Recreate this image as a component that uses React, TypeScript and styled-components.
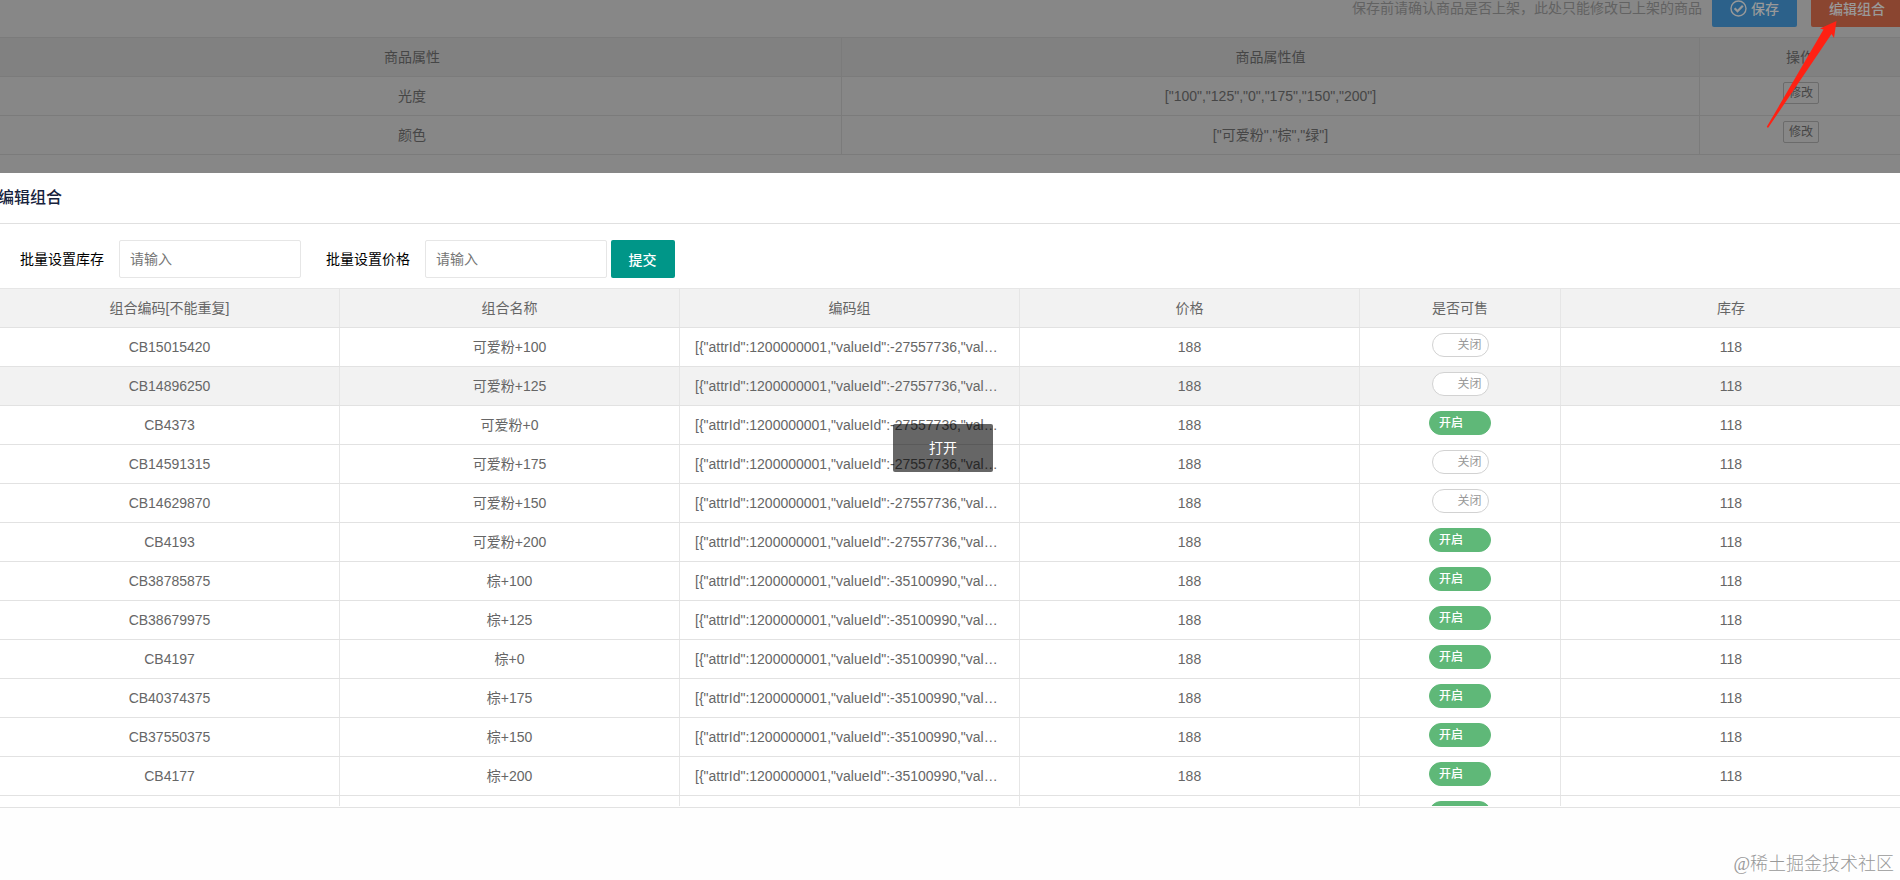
import React from 'react';
import styled, { createGlobalStyle } from 'styled-components';

const Global = createGlobalStyle`
  *, *::before, *::after { box-sizing: border-box; }
  html, body { margin: 0; padding: 0; background: #fff; overflow: hidden; }
  body { font: 14px/24px "Liberation Sans", "Noto Sans CJK SC", sans-serif; color: #333; }
  button, input { font-family: inherit; }
`;

const Page = styled.div`
  position: relative;
  width: 1900px;
  height: 880px;
  overflow: hidden;
  display: flex;
  flex-direction: column;
`;

const Backdrop = styled.section`
  flex: 0 0 173px;
  display: flex;
  flex-direction: column;
  background: #878787;
  overflow: hidden;
`;

const ActionBar = styled.div`
  flex: 0 0 37px;
  height: 37px;
  min-height: 0;
  display: flex;
  justify-content: flex-end;
  align-items: flex-end;
  padding-bottom: 10px;
  margin-right: -17px;
`;

const Hint = styled.span`
  color: #626262;
  line-height: 38px;
  margin-right: 10px;
`;

const ActionButton = styled.button<{ $tone: string; $w: number }>`
  flex: 0 0 ${p => p.$w}px;
  width: ${p => p.$w}px;
  height: 38px;
  margin-right: 14px;
  padding: 0;
  border: 0;
  border-radius: 2px;
  display: flex;
  align-items: center;
  justify-content: center;
  gap: 4px;
  font-size: 14px;
  font-weight: 500;
  color: #999;
  background: ${p => p.$tone};
`;

const AttrTable = styled.div`
  flex: none;
  margin-left: -17px;
  width: 1918px;
  border-top: 1px solid #7b7b7b;
`;

const AttrRow = styled.div<{ $head?: boolean }>`
  display: grid;
  grid-template-columns: 859px 858px 201px;
  height: 39px;
  border-bottom: 1px solid #7b7b7b;
  background: ${p => (p.$head ? '#818181' : 'transparent')};
  color: #464646;
`;

const AttrCell = styled.div`
  display: flex;
  justify-content: center;
  line-height: 38px;
  border-right: 1px solid #7b7b7b;
`;

const EditButton = styled.button`
  width: 36px;
  height: 22px;
  margin: 5px 0 0 2px;
  padding: 0;
  border: 1px solid #6b6b6b;
  border-radius: 2px;
  background: transparent;
  color: #464646;
  font-size: 12px;
  line-height: 20px;
`;

const Dialog = styled.section`
  flex: 1;
  background: #fff;
  display: flex;
  flex-direction: column;
`;

const DialogTitle = styled.h2`
  flex: 0 0 51px;
  margin: 0;
  border-bottom: 1px solid #e0e0e0;
  font-size: 16px;
  font-weight: 500;
  line-height: 49px;
  text-indent: -2px;
  color: #17233d;
`;

const BatchForm = styled.form`
  flex: 0 0 64px;
  display: flex;
  align-items: flex-start;
  padding: 16px 0 0 20px;
`;

const FieldLabel = styled.label`
  width: 99px;
  line-height: 38px;
  color: #000;
`;

const TextInput = styled.input<{ $gap: number }>`
  width: 182px;
  height: 38px;
  margin-right: ${p => p.$gap}px;
  padding: 0 0 0 10px;
  border: 1px solid #e6e6e6;
  border-radius: 2px;
  font-size: 14px;
  outline: none;
  &::placeholder { color: #757575; opacity: 1; }
`;

const Submit = styled.button`
  width: 64px;
  height: 38px;
  padding: 0 1px 1px 0;
  border: 0;
  border-radius: 2px;
  background: #009688;
  color: #fff;
  font-size: 14px;
  font-weight: 500;
`;

const ComboTable = styled.div`
  flex: 0 0 518px;
  overflow: hidden;
  border-top: 1px solid #e6e6e6;
`;

const ComboRow = styled.div<{ $shade?: boolean }>`
  display: grid;
  grid-template-columns: 340px 340px 340px 340px 201px 341px;
  width: 1902px;
  height: 39px;
  border-bottom: 1px solid #e2e2e2;
  background: ${p => (p.$shade ? '#f2f2f2' : '#fff')};
  color: #666;
`;

const ComboCell = styled.div`
  min-width: 0;
  padding: 0 15px;
  line-height: 38px;
  text-align: center;
  white-space: nowrap;
  overflow: hidden;
  text-overflow: ellipsis;
  border-right: 1px solid #e6e6e6;
`;

const SwitchCell = styled(ComboCell)`
  display: flex;
  justify-content: center;
  align-items: flex-start;
  padding-top: 5px;
`;

const Switch = styled.span<{ $on: boolean }>`
  width: ${p => (p.$on ? 62 : 57)}px;
  height: 24px;
  padding: ${p => (p.$on ? '0 0 0 9px' : '0 6px 0 0')};
  border: 1px solid ${p => (p.$on ? '#5fb878' : '#d2d2d2')};
  border-radius: 20px;
  background: ${p => (p.$on ? '#5fb878' : '#fff')};
  color: ${p => (p.$on ? '#fff' : '#999')};
  text-align: ${p => (p.$on ? 'left' : 'right')};
  font-size: 12px;
  font-weight: ${p => (p.$on ? 500 : 400)};
  line-height: 22px;
`;

const Footer = styled.footer`
  flex: 1;
  margin-top: 1px;
  border-top: 1px solid #e2e2e2;
  background: #fefefe;
  display: flex;
  justify-content: flex-end;
  align-items: flex-end;
  padding: 0 6px 3px 0;
`;

const Watermark = styled.span`
  font-family: "Liberation Serif", "Noto Sans CJK SC", serif;
  font-weight: 300;
  font-size: 18px;
  line-height: 26px;
  color: #999;
  white-space: nowrap;
`;

const Toast = styled.div`
  position: absolute;
  left: 893px;
  top: 424px;
  width: 100px;
  height: 48px;
  border-radius: 2px;
  background: rgba(0, 0, 0, 0.6);
  color: #fff;
  line-height: 48px;
  text-align: center;
`;

const Arrow = styled.svg`
  position: absolute;
  left: 1760px;
  top: 15px;
  width: 90px;
  height: 120px;
`;

type Combo = [code: string, name: string, valueId: string, on: boolean];

const combos: Combo[] = [
  ['CB15015420', '可爱粉+100', '-27557736', false],
  ['CB14896250', '可爱粉+125', '-27557736', false],
  ['CB4373', '可爱粉+0', '-27557736', true],
  ['CB14591315', '可爱粉+175', '-27557736', false],
  ['CB14629870', '可爱粉+150', '-27557736', false],
  ['CB4193', '可爱粉+200', '-27557736', true],
  ['CB38785875', '棕+100', '-35100990', true],
  ['CB38679975', '棕+125', '-35100990', true],
  ['CB4197', '棕+0', '-35100990', true],
  ['CB40374375', '棕+175', '-35100990', true],
  ['CB37550375', '棕+150', '-35100990', true],
  ['CB4177', '棕+200', '-35100990', true],
];

const headings = ['组合编码[不能重复]', '组合名称', '编码组', '价格', '是否可售', '库存'];

const attributes = [
  ['光度', '["100","125","0","175","150","200"]'],
  ['颜色', '["可爱粉","棕","绿"]'],
];

export default function App() {
  return (
    <Page>
      <Global />
      <Backdrop>
        <ActionBar>
          <Hint>保存前请确认商品是否上架，此处只能修改已上架的商品</Hint>
          <ActionButton $tone="#2c618a" $w={85}>
            <svg width="17" height="17" viewBox="0 0 17 17" fill="none" stroke="#999">
              <circle cx="8.5" cy="8.5" r="7.5" strokeWidth="1.4" />
              <path d="M4.6 8.3 7.5 11.2 12.8 5.7" strokeWidth="2.2" />
            </svg>
            保存
          </ActionButton>
          <ActionButton $tone="#8a4530" $w={92}>编辑组合</ActionButton>
        </ActionBar>
        <AttrTable>
          <AttrRow $head>
            <AttrCell>商品属性</AttrCell>
            <AttrCell>商品属性值</AttrCell>
            <AttrCell>操作</AttrCell>
          </AttrRow>
          {attributes.map(([name, value]) => (
            <AttrRow key={name}>
              <AttrCell>{name}</AttrCell>
              <AttrCell>{value}</AttrCell>
              <AttrCell><EditButton>修改</EditButton></AttrCell>
            </AttrRow>
          ))}
        </AttrTable>
      </Backdrop>
      <Dialog>
        <DialogTitle>编辑组合</DialogTitle>
        <BatchForm>
          <FieldLabel>批量设置库存</FieldLabel>
          <TextInput $gap={25} placeholder="请输入" />
          <FieldLabel>批量设置价格</FieldLabel>
          <TextInput $gap={4} placeholder="请输入" />
          <Submit type="button">提交</Submit>
        </BatchForm>
        <ComboTable>
          <ComboRow $shade>
            {headings.map(h => <ComboCell key={h}>{h}</ComboCell>)}
          </ComboRow>
          {combos.map(([code, name, valueId, on], i) => (
            <ComboRow key={code} $shade={i === 1}>
              <ComboCell>{code}</ComboCell>
              <ComboCell>{name}</ComboCell>
              <ComboCell>{`[{"attrId":1200000001,"valueId":${valueId},"valueName":"${name.split('+')[0]}"}]`}</ComboCell>
              <ComboCell>188</ComboCell>
              <SwitchCell><Switch $on={on}>{on ? '开启' : '关闭'}</Switch></SwitchCell>
              <ComboCell>118</ComboCell>
            </ComboRow>
          ))}
          <ComboRow>
            <ComboCell /><ComboCell /><ComboCell /><ComboCell />
            <SwitchCell><Switch $on /></SwitchCell>
            <ComboCell />
          </ComboRow>
        </ComboTable>
        <Footer><Watermark>@稀土掘金技术社区</Watermark></Footer>
      </Dialog>
      <Toast>打开</Toast>
      <Arrow viewBox="1760 15 90 120" fill="#ff2113">
        <path d="M1836.5 21 1834 38 1831.5 34 1768 128 1766.8 126.8 1823.5 29.5 1820 28.5Z" />
      </Arrow>
    </Page>
  );
}
